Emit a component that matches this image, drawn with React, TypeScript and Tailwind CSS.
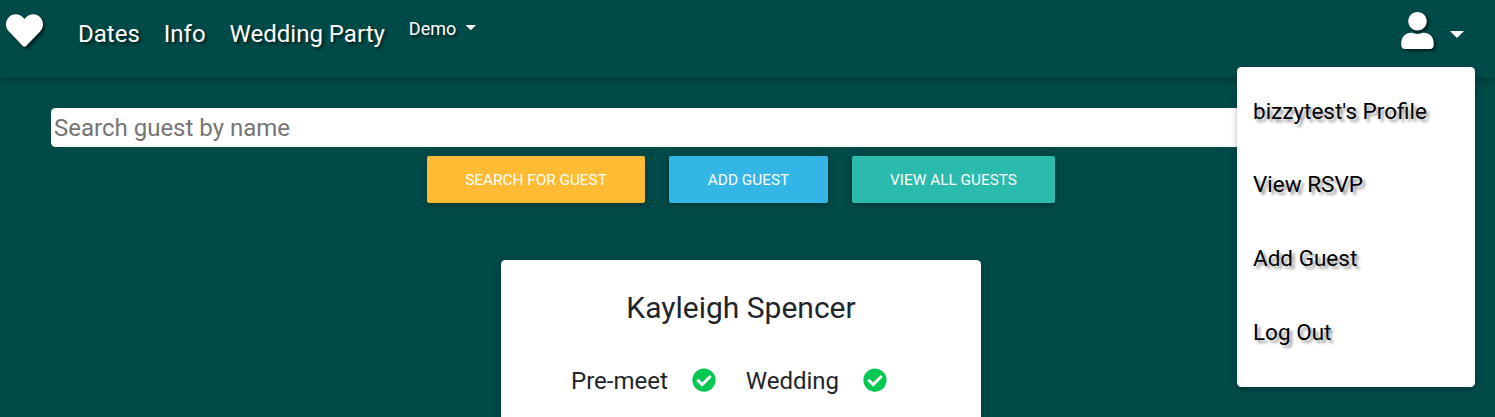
import type { ReactNode } from "react";
import { FaHeart, FaUser, FaCheckCircle } from "react-icons/fa";

const textShadow = "[text-shadow:2px_2px_3px_rgba(0,0,0,0.6)]";
const iconShadow = "[filter:drop-shadow(2px_2px_1.5px_rgba(0,0,0,0.6))]";

function NavLink({ children }: { children: ReactNode }) {
  return (
    <a href="#" className={`text-[24px] leading-9 whitespace-nowrap ${textShadow}`}>
      {children}
    </a>
  );
}

function ActionButton({ color, children }: { color: string; children: ReactNode }) {
  return (
    <button
      className={`h-[47px] rounded-[2px] pt-0.5 text-center text-[15.35px] font-normal whitespace-nowrap text-white uppercase shadow-[0_2px_5px_0_rgba(0,0,0,0.16),0_2px_10px_0_rgba(0,0,0,0.12)] ${color}`}
    >
      {children}
    </button>
  );
}

function Attendance({ label }: { label: string }) {
  return (
    <div className="flex items-center gap-6">
      <span>{label}</span>
      <FaCheckCircle className="-mt-0.5 size-6 text-[#00c851]" />
    </div>
  );
}

const menuItems = ["bizzytest's Profile", "View RSVP", "Add Guest", "Log Out"];

export default function App() {
  return (
    <div className="h-[417px] overflow-hidden bg-[#004a48] font-[Roboto,sans-serif] text-[#212529]">
      <header className="relative z-10 flex h-[78px] items-start justify-between text-white shadow-[0_2px_5px_0_rgba(0,0,0,0.16),0_2px_10px_0_rgba(0,0,0,0.12)]">
        <nav className="flex items-start pt-4 pl-1.5">
          <a href="#" aria-label="Home" className="mr-[35px] -mt-1">
            <FaHeart className={`size-[37px] ${iconShadow}`} />
          </a>
          <div className="flex gap-6">
            <NavLink>Dates</NavLink>
            <NavLink>Info</NavLink>
            <NavLink>Wedding Party</NavLink>
            <button className={`flex h-[25px] items-center text-[18px] ${textShadow}`}>
              Demo
              <span className="mb-0.5 ml-[9px] h-[5.5px] w-[11px] bg-white [clip-path:polygon(0_0,100%_0,50%_100%)]" />
            </button>
          </div>
        </nav>
        <div className="relative mr-[31px] pt-3">
          <button aria-label="Account" className="flex items-center">
            <FaUser className={`h-[37px] w-[33px] ${iconShadow}`} />
            <span className="mt-2 ml-4 h-0 w-0 border-x-[7px] border-t-[7px] border-x-transparent border-t-white" />
          </button>
          <ul className="absolute top-[67px] -right-[11px] flex h-[320px] w-[238px] flex-col rounded-[4.5px] bg-white pt-[7.6px] pl-4 text-[22.5px] text-black shadow-[0_2px_5px_0_rgba(0,0,0,0.16),0_2px_10px_0_rgba(0,0,0,0.12)]">
            {menuItems.map((item) => (
              <li key={item} className="flex h-[73.75px] shrink-0 items-center [text-shadow:3px_3px_3px_rgba(0,0,0,0.4)]">
                {item}
              </li>
            ))}
          </ul>
        </div>
      </header>

      <main className="px-[51px] pt-[30px]">
        <input
          type="text"
          placeholder="Search guest by name"
          className="block h-[39px] w-full rounded-[4.5px] bg-white px-[3px] text-[24px] placeholder:text-[#757575]"
        />
        <div className="mt-[9px] ml-[376px] grid grid-cols-[218px_159px_203px] gap-6">
          <ActionButton color="bg-[#ffbb33]">Search for guest</ActionButton>
          <ActionButton color="bg-[#33b5e5]">Add guest</ActionButton>
          <ActionButton color="bg-[#2bbbad]">View all guests</ActionButton>
        </div>
        <article className="mt-[57px] ml-[450px] h-[220px] w-[480px] rounded-[4.5px] bg-white pt-7 shadow-[0_2px_5px_0_rgba(0,0,0,0.16),0_2px_10px_0_rgba(0,0,0,0.12)]">
          <h2 className="text-center text-[30px] leading-10">Kayleigh Spencer</h2>
          <div className="mt-[35px] flex gap-[30px] pl-[70px] text-[24px] leading-9">
            <Attendance label="Pre-meet" />
            <Attendance label="Wedding" />
          </div>
        </article>
      </main>
    </div>
  );
}
